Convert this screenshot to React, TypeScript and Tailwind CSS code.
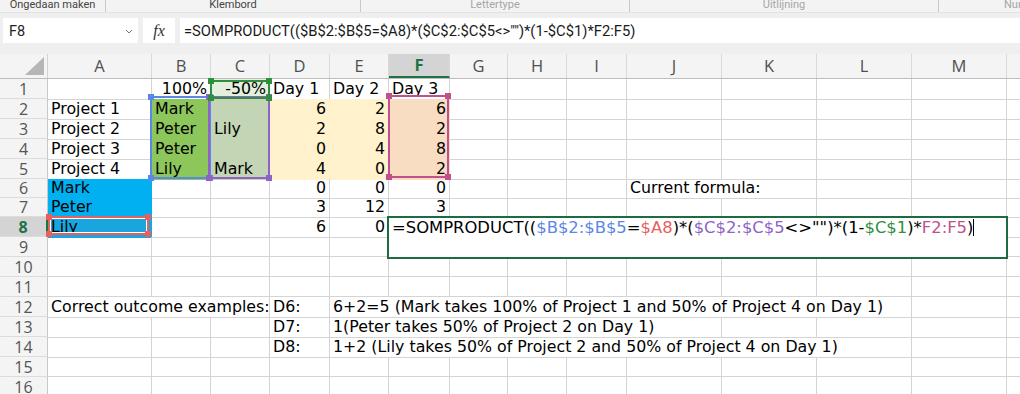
import clsx from "clsx";
import type { ReactNode } from "react";

type Cell = { v?: ReactNode; r?: boolean; fill?: string; span?: string };

const COLS = ["A", "B", "C", "D", "E", "F", "G", "H", "I", "J", "K", "L", "M", "N"];
const GRID =
  "grid shrink-0 grid-cols-[104px_59px_59px_60px_59px_61px_58px_59px_60px_95px_95px_95px_95px_95px]";

const GREEN = "bg-[#8dc65b] border-[#8dc65b]";
const SAGE = "bg-[#c3d5b4] border-[#c3d5b4]";
const PALE = "bg-[#e4efde] border-[#e4efde]";
const YELLOW = "bg-[#fff2cc] border-[#fff2cc]";
const PEACH = "bg-[#f8ddc2] border-[#f8ddc2]";
const BLUE = "bg-[#00b0f0] border-[#00b0f0]";
const BLUE8 = "bg-[#19a6de] border-[#19a6de]";

const e: Cell = {};
const blank = (n: number): Cell[] => Array(n).fill(e);
const num = (v: string, fill?: string): Cell => ({ v, r: true, fill });

const rows: { n: number; h: string; cells: Cell[] }[] = [
  {
    n: 1,
    h: "h-[20px]",
    cells: [e, num("100%"), num("-50%", PALE), { v: "Day 1" }, { v: "Day 2" }, { v: "Day 3" }, ...blank(8)],
  },
  {
    n: 2,
    h: "h-[20px]",
    cells: [{ v: "Project 1" }, { v: "Mark", fill: GREEN }, { fill: SAGE }, num("6", YELLOW), num("2", YELLOW), num("6", PEACH), ...blank(8)],
  },
  {
    n: 3,
    h: "h-[20px]",
    cells: [{ v: "Project 2" }, { v: "Peter", fill: GREEN }, { v: "Lily", fill: SAGE }, num("2", YELLOW), num("8", YELLOW), num("2", PEACH), ...blank(8)],
  },
  {
    n: 4,
    h: "h-[20px]",
    cells: [{ v: "Project 3" }, { v: "Peter", fill: GREEN }, { fill: SAGE }, num("0", YELLOW), num("4", YELLOW), num("8", PEACH), ...blank(8)],
  },
  {
    n: 5,
    h: "h-[20px]",
    cells: [{ v: "Project 4" }, { v: "Lily", fill: GREEN }, { v: "Mark", fill: SAGE }, num("4", YELLOW), num("0", YELLOW), num("2", PEACH), ...blank(8)],
  },
  {
    n: 6,
    h: "h-[19px]",
    cells: [{ v: "Mark", fill: BLUE }, e, e, num("0"), num("0"), num("0"), e, e, e, { v: "Current formula:", span: "col-span-2" }, e, e, e],
  },
  {
    n: 7,
    h: "h-[19px]",
    cells: [{ v: "Peter", fill: BLUE }, e, e, num("3"), num("12"), num("3"), ...blank(8)],
  },
  { n: 8, h: "h-[20px]", cells: [{ v: "Lily", fill: BLUE8 }, e, e, num("6"), num("0"), ...blank(9)] },
  { n: 9, h: "h-[20px]", cells: blank(14) },
  { n: 10, h: "h-[20px]", cells: blank(14) },
  { n: 11, h: "h-[20px]", cells: blank(14) },
  {
    n: 12,
    h: "h-[20px]",
    cells: [
      { v: "Correct outcome examples:", span: "col-span-3" },
      { v: "D6:" },
      { v: "6+2=5 (Mark takes 100% of Project 1 and 50% of Project 4 on Day 1)", span: "col-span-8" },
      e,
      e,
    ],
  },
  {
    n: 13,
    h: "h-[20px]",
    cells: [e, e, e, { v: "D7:" }, { v: "1(Peter takes 50% of Project 2 on Day 1)", span: "col-span-6" }, e, e, e, e],
  },
  {
    n: 14,
    h: "h-[20px]",
    cells: [e, e, e, { v: "D8:" }, { v: "1+2 (Lily takes 50% of Project 2 and 50% of Project 4 on Day 1)", span: "col-span-8" }, e, e],
  },
  { n: 15, h: "h-[20px]", cells: blank(14) },
  { n: 16, h: "h-[20px]", cells: blank(14) },
];

function RefBox({ pos, line, sq, inner }: { pos: string; line: string; sq: string; inner?: boolean }) {
  return (
    <div className={clsx("absolute border-2", pos, line)}>
      {inner && <div className="absolute inset-0 border border-white" />}
      <div className={clsx("absolute -left-[4px] -top-[4px] w-[6px] h-[6px]", sq)} />
      <div className={clsx("absolute -right-[4px] -top-[4px] w-[6px] h-[6px]", sq)} />
      <div className={clsx("absolute -left-[4px] -bottom-[4px] w-[6px] h-[6px]", sq)} />
      <div className={clsx("absolute -right-[4px] -bottom-[4px] w-[6px] h-[6px]", sq)} />
    </div>
  );
}

function RibbonGroup({ w, label, dim }: { w: string; label: string; dim?: boolean }) {
  return (
    <div className={clsx("h-full flex justify-center border-r border-[#c9c9c9] shrink-0", w)}>
      <span className={clsx("leading-[10px]", dim ? "text-[#a6a6a6]" : "text-[#444]")}>{label}</span>
    </div>
  );
}

export default function App() {
  return (
    <div className="relative w-[1020px] h-[394px] overflow-hidden bg-white">
      {/* ribbon group labels */}
      <div className="h-[12px] bg-[#f3f3f3] flex text-[11px] font-['Roboto',sans-serif] overflow-hidden">
        <RibbonGroup w="w-[106px]" label="Ongedaan maken" />
        <RibbonGroup w="w-[255px]" label="Klembord" />
        <RibbonGroup w="w-[269px]" label="Lettertype" dim />
        <RibbonGroup w="w-[309px]" label="Uitlijning" dim />
        <div className="pl-[65px] leading-[10px] text-[#a6a6a6]">Num</div>
      </div>

      {/* formula bar */}
      <div className="h-[42px] bg-[#efefef] border-t border-[#e2e2e2] pt-[5px] pl-[3px] flex gap-[5px]">
        <div className="w-[135px] h-[25px] bg-white flex items-center justify-between pl-[6px] pr-[5px]">
          <span className="text-[14.5px] text-[#222] font-['Roboto',sans-serif] pt-[2px]">F8</span>
          <svg width="8" height="5" viewBox="0 0 8 5" className="mt-[1px]">
            <path d="M1 1l3 3 3-3" fill="none" stroke="#777" strokeWidth="1" />
          </svg>
        </div>
        <div className="w-[32px] h-[25px] bg-white flex items-center justify-center">
          <span className="italic text-[16px] text-[#333] font-['Liberation_Serif',serif]">fx</span>
        </div>
        <div className="flex-1 h-[25px] bg-white pl-[4px] pt-[2px] text-[14.75px] leading-[23px] text-[#1a1a1a] font-['Roboto',sans-serif] whitespace-nowrap">
          =SOMPRODUCT(($B$2:$B$5=$A8)*($C$2:$C$5&lt;&gt;"")*(1-$C$1)*F2:F5)
        </div>
      </div>

      {/* sheet */}
      <div className="font-['DejaVu_Sans',sans-serif] text-[15.8px] text-black">
        {/* column headers */}
        <div className="flex h-[25px] bg-[#f4f4f4] border-b border-[#bdbdbd]">
          <div className="w-[48px] shrink-0 border-r border-[#d2d2d2] relative">
            <svg width="48" height="24" className="absolute left-0 top-0">
              <polygon points="44,3 44,21 25,21" fill="#b6b6b6" />
            </svg>
          </div>
          <div className={GRID}>
            {COLS.map((c) => (
              <div
                key={c}
                className={clsx(
                  "flex items-center justify-center border-r border-[#d9d9d9] text-[16.5px] leading-none font-['Open_Sans',sans-serif]",
                  c === "F"
                    ? "bg-[#d4d4d4] text-[#217346] font-bold border-b-2 border-b-[#217346]"
                    : "text-[#505050]"
                )}
              >
                {c}
              </div>
            ))}
          </div>
        </div>

        {rows.map((row) => (
          <div key={row.n} className={clsx("flex", row.h)}>
            <div
              className={clsx(
                "w-[48px] shrink-0 flex items-center justify-center border-b border-[#dcdcdc] text-[16px] leading-none font-['Open_Sans',sans-serif]",
                row.n === 8
                  ? "bg-[#d4d4d4] text-[#217346] font-bold border-r-2 border-r-[#217346]"
                  : "bg-[#f4f4f4] text-[#555] border-r border-r-[#c8c8c8]"
              )}
            >
              {row.n}
            </div>
            <div className={GRID}>
              {row.cells.map((c, i) => (
                <div
                  key={i}
                  className={clsx(
                    "border-r border-b px-[3px] whitespace-nowrap",
                    row.h === "h-[20px]" ? "leading-[19.5px]" : "leading-[18.5px]",
                    c.r && "text-right",
                    c.fill ?? "border-[#d4d4d4]",
                    c.span
                  )}
                >
                  {c.v}
                </div>
              ))}
            </div>
          </div>
        ))}
      </div>

      {/* reference highlights */}
      <RefBox pos="left-[150px] top-[96px] w-[61px] h-[83px]" line="border-[#5b87e6]" sq="bg-[#5b87e6]" />
      <RefBox pos="left-[208px] top-[96px] w-[62px] h-[83px]" line="border-[#8f62c8]" sq="bg-[#8f62c8]" />
      <RefBox pos="left-[388px] top-[95px] w-[61px] h-[83px]" line="border-[#c2508d]" sq="bg-[#c2508d]" />
      <RefBox pos="left-[210px] top-[80px] w-[60px] h-[19px]" line="border-[#2f8f3d]" sq="bg-[#2f8f3d]" />
      <RefBox pos="left-[48px] top-[216px] w-[101px] h-[19px]" line="border-[#e8605e]" sq="bg-[#e8605e]" inner />

      {/* in-cell editor F8 */}
      <div className="absolute left-[387px] top-[216px] w-[621px] h-[43px] border-2 border-[#1e6b41] bg-white pl-[3px] font-['DejaVu_Sans',sans-serif] text-[16.4px] leading-[19px] whitespace-nowrap">
        <span>=SOMPRODUCT((</span>
        <span className="text-[#5b87e6]">$B$2:$B$5</span>
        <span>=</span>
        <span className="text-[#e8605e]">$A8</span>
        <span>)*(</span>
        <span className="text-[#8f62c8]">$C$2:$C$5</span>
        <span>&lt;&gt;"")*(1-</span>
        <span className="text-[#2f8f3d]">$C$1</span>
        <span>)*</span>
        <span className="text-[#c2508d]">F2:F5</span>
        <span>)</span>
        <span className="inline-block w-[1px] h-[17px] bg-black align-[-3px]" />
      </div>
    </div>
  );
}
